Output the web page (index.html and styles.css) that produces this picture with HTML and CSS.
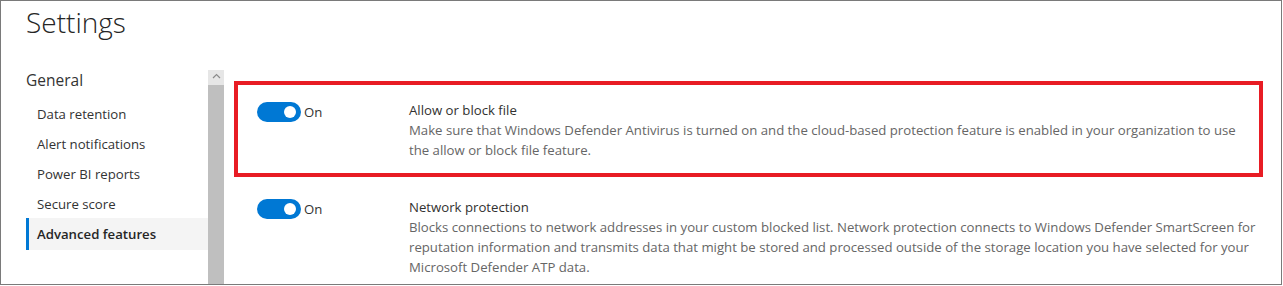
FILE: index.html
```html
<!DOCTYPE html>
<html lang="en">
<head>
<meta charset="utf-8">
<title>Settings</title>
<link rel="stylesheet" href="styles.css">
</head>
<body>
<div class="frame">
  <h1 class="page-title">Settings</h1>
  <div class="main">
    <nav class="nav">
      <div class="nav-group">General</div>
      <ul class="nav-list">
        <li class="nav-item">Data retention</li>
        <li class="nav-item">Alert notifications</li>
        <li class="nav-item">Power BI reports</li>
        <li class="nav-item">Secure score</li>
        <li class="nav-item active">Advanced features</li>
      </ul>
    </nav>
    <div class="scrollbar">
      <div class="scroll-arrow">
        <svg width="9" height="6" viewBox="0 0 9 6"><polyline points="1,5 4.5,1.5 8,5" fill="none" stroke="#8a8a8a" stroke-width="1.2"/></svg>
      </div>
      <div class="scroll-thumb"></div>
    </div>
    <section class="content">
      <div class="feature highlighted">
        <div class="toggle-col">
          <span class="toggle"><span class="knob"></span></span>
          <span class="toggle-label">On</span>
        </div>
        <div class="text-col">
          <div class="feature-title">Allow or block file</div>
          <div class="feature-desc">Make sure that Windows Defender Antivirus is turned on and the cloud-based protection feature is enabled in your organization to use<br>the allow or block file feature.</div>
        </div>
      </div>
      <div class="feature">
        <div class="toggle-col">
          <span class="toggle"><span class="knob"></span></span>
          <span class="toggle-label">On</span>
        </div>
        <div class="text-col">
          <div class="feature-title">Network protection</div>
          <div class="feature-desc">Blocks connections to network addresses in your custom blocked list. Network protection connects to Windows Defender SmartScreen for<br>reputation information and transmits data that might be stored and processed outside of the storage location you have selected for your<br>Microsoft Defender ATP data.</div>
        </div>
      </div>
    </section>
  </div>
</div>
</body>
</html>
```
FILE: styles.css
```css
* { box-sizing: border-box; }
html, body { margin: 0; padding: 0; background: #ffffff; }
body { font-family: "Open Sans", "Noto Sans", sans-serif; color: #333333; }

.frame {
  width: 1282px;
  height: 285px;
  border: 1px solid #7a7a7a;
  overflow: hidden;
  display: flex;
  flex-direction: column;
}

.page-title {
  margin: 2px 0 0 0;
  padding-left: 25px;
  font-size: 28px;
  font-weight: 300;
  line-height: 38px;
  color: #262626;
}

.main {
  margin-top: 29px;
  flex: 1;
  display: flex;
  min-height: 0;
}

.nav {
  width: 182px;
  margin-left: 25px;
}

.nav-group {
  font-size: 15.5px;
  line-height: 20px;
  color: #333333;
  padding-left: 0;
}

.nav-list {
  list-style: none;
  margin: 9px 0 0 0;
  padding: 0;
}

.nav-item {
  font-size: 13.2px;
  line-height: 30px;
  height: 30px;
  padding-left: 11px;
  color: #333333;
  white-space: nowrap;
}

.nav-item.active {
  height: 32px;
  line-height: 32px;
  margin-top: -1px;
  background: #f4f4f4;
  border-left: 3px solid #0078d4;
  padding-left: 8px;
  font-weight: 600;
  color: #262626;
}

.scrollbar {
  width: 16px;
  display: flex;
  flex-direction: column;
}

.scroll-arrow {
  height: 15px;
  background: #e6e6e6;
  display: flex;
  justify-content: center;
  padding-top: 3px;
}

.scroll-thumb {
  flex: 1;
  background: #bfbfbf;
}

.content {
  flex: 1;
  padding: 15px 0 0 14px;
  display: flex;
  flex-direction: column;
  gap: 9px;
}

.feature {
  width: 1021px;
  display: flex;
  padding: 15px 0 13px 19px;
}

.feature.highlighted {
  outline: 4px solid #e81c24;
}

.toggle-col {
  width: 152px;
  flex: none;
  display: flex;
  align-items: flex-start;
  padding-top: 2px;
  gap: 3px;
}

.toggle {
  width: 44px;
  height: 20px;
  border-radius: 10px;
  background: #0078d4;
  display: flex;
  align-items: center;
  justify-content: flex-end;
  padding-right: 5px;
}

.knob {
  width: 12px;
  height: 12px;
  border-radius: 50%;
  background: #ffffff;
}

.toggle-label {
  font-size: 13.2px;
  line-height: 20px;
  color: #333333;
}

.text-col {
  flex: 1;
  white-space: nowrap;
}

.feature-title {
  font-size: 13.2px;
  line-height: 20px;
  color: #323130;
}

.feature-desc {
  font-size: 13.2px;
  line-height: 20px;
  color: #666666;
}
```
